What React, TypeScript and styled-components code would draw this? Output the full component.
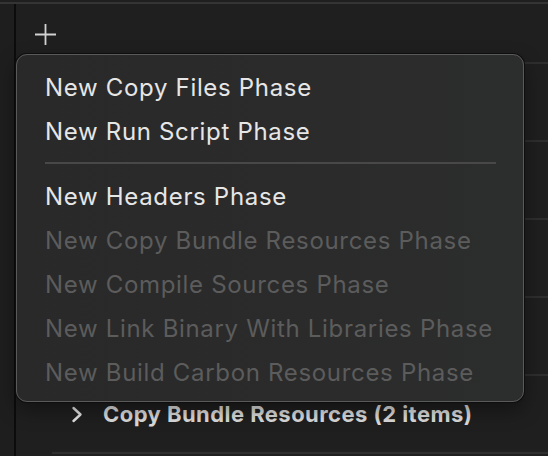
import React from "react";
import styled, { createGlobalStyle } from "styled-components";

const GlobalStyle = createGlobalStyle`
  html, body {
    margin: 0;
    padding: 0;
    background: #1f1f1f;
  }
  body {
    font-family: "Inter", "Liberation Sans", sans-serif;
    -webkit-font-smoothing: antialiased;
  }
`;

const Window = styled.div`
  width: 548px;
  height: 456px;
  overflow: hidden;
  position: relative;
  display: flex;
  flex-direction: column;
  background: #1f1f1f;
`;

const TopRule = styled.div`
  height: 2px;
  margin-top: 2px;
  background: #343434;
  flex-shrink: 0;
`;

const Body = styled.div`
  flex: 1;
  display: flex;
`;

const Gutter = styled.div`
  width: 14px;
  background: #1e1e1e;
  border-right: 2px solid #0c0c0c;
`;

const Main = styled.div`
  flex: 1;
  display: flex;
  flex-direction: column;
`;

const Toolbar = styled.div`
  height: 58px;
  display: flex;
  align-items: flex-start;
  padding: 20px 0 0 19px;
  box-sizing: border-box;
`;

const PhaseRow = styled.div`
  height: 78px;
  flex-shrink: 0;
  border-top: 2px solid #2e2e2e;
  margin-left: 36px;
  box-sizing: border-box;
  display: flex;
  align-items: center;
  padding-left: 19px;
  gap: 20px;
  color: #dcdcdc;
  font-size: 22px;
  font-weight: 700;
  letter-spacing: 0.45px;
`;

const Menu = styled.div`
  position: absolute;
  left: 16px;
  top: 54px;
  width: 508px;
  height: 348px;
  box-sizing: border-box;
  border-radius: 11px;
  background: linear-gradient(90deg, #292929, #2b2b2b 60%, #2c2d2d);
  border: 1px solid #5a5a5a;
  box-shadow: 0 0 0 1px #0e0e0e, 0 8px 20px rgba(0, 0, 0, 0.4);
  padding: 10px 0 0;
  display: flex;
  flex-direction: column;
`;

const Item = styled.div<{ $disabled?: boolean }>`
  height: 44px;
  display: flex;
  align-items: center;
  padding-left: 28px;
  font-size: 24px;
  letter-spacing: 0.68px;
  color: ${(p) => (p.$disabled ? "#5c5c5c" : "#e6e6e6")};
`;

const Separator = styled.div`
  height: 2px;
  background: #484848;
  margin: 9px 27px 10px 28px;
`;

const Plus = () => (
  <svg width="21" height="21" viewBox="0 0 21 21">
    <path d="M10.5 0v21M0 10.5h21" stroke="#d2d2d2" strokeWidth="1.8" />
  </svg>
);

const Chevron = () => (
  <svg width="12" height="17" viewBox="0 0 12 17">
    <path
      d="M2.5 2l7 6.5-7 6.5"
      stroke="#e4e4e4"
      strokeWidth="2.4"
      fill="none"
      strokeLinecap="round"
      strokeLinejoin="round"
    />
  </svg>
);

const enabled = ["New Copy Files Phase", "New Run Script Phase"];
const rest: { label: string; disabled: boolean }[] = [
  { label: "New Headers Phase", disabled: false },
  { label: "New Copy Bundle Resources Phase", disabled: true },
  { label: "New Compile Sources Phase", disabled: true },
  { label: "New Link Binary With Libraries Phase", disabled: true },
  { label: "New Build Carbon Resources Phase", disabled: true },
];

export default function App() {
  return (
    <>
      <GlobalStyle />
      <Window>
        <TopRule />
        <Body>
          <Gutter />
          <Main>
            <Toolbar>
              <Plus />
            </Toolbar>
            <PhaseRow />
            <PhaseRow />
            <PhaseRow />
            <PhaseRow />
            <PhaseRow>
              <Chevron />
              <span>Copy Bundle Resources (2 items)</span>
            </PhaseRow>
            <PhaseRow />
          </Main>
        </Body>
        <Menu>
          {enabled.map((l) => (
            <Item key={l}>{l}</Item>
          ))}
          <Separator />
          {rest.map((r) => (
            <Item key={r.label} $disabled={r.disabled}>
              {r.label}
            </Item>
          ))}
        </Menu>
      </Window>
    </>
  );
}
